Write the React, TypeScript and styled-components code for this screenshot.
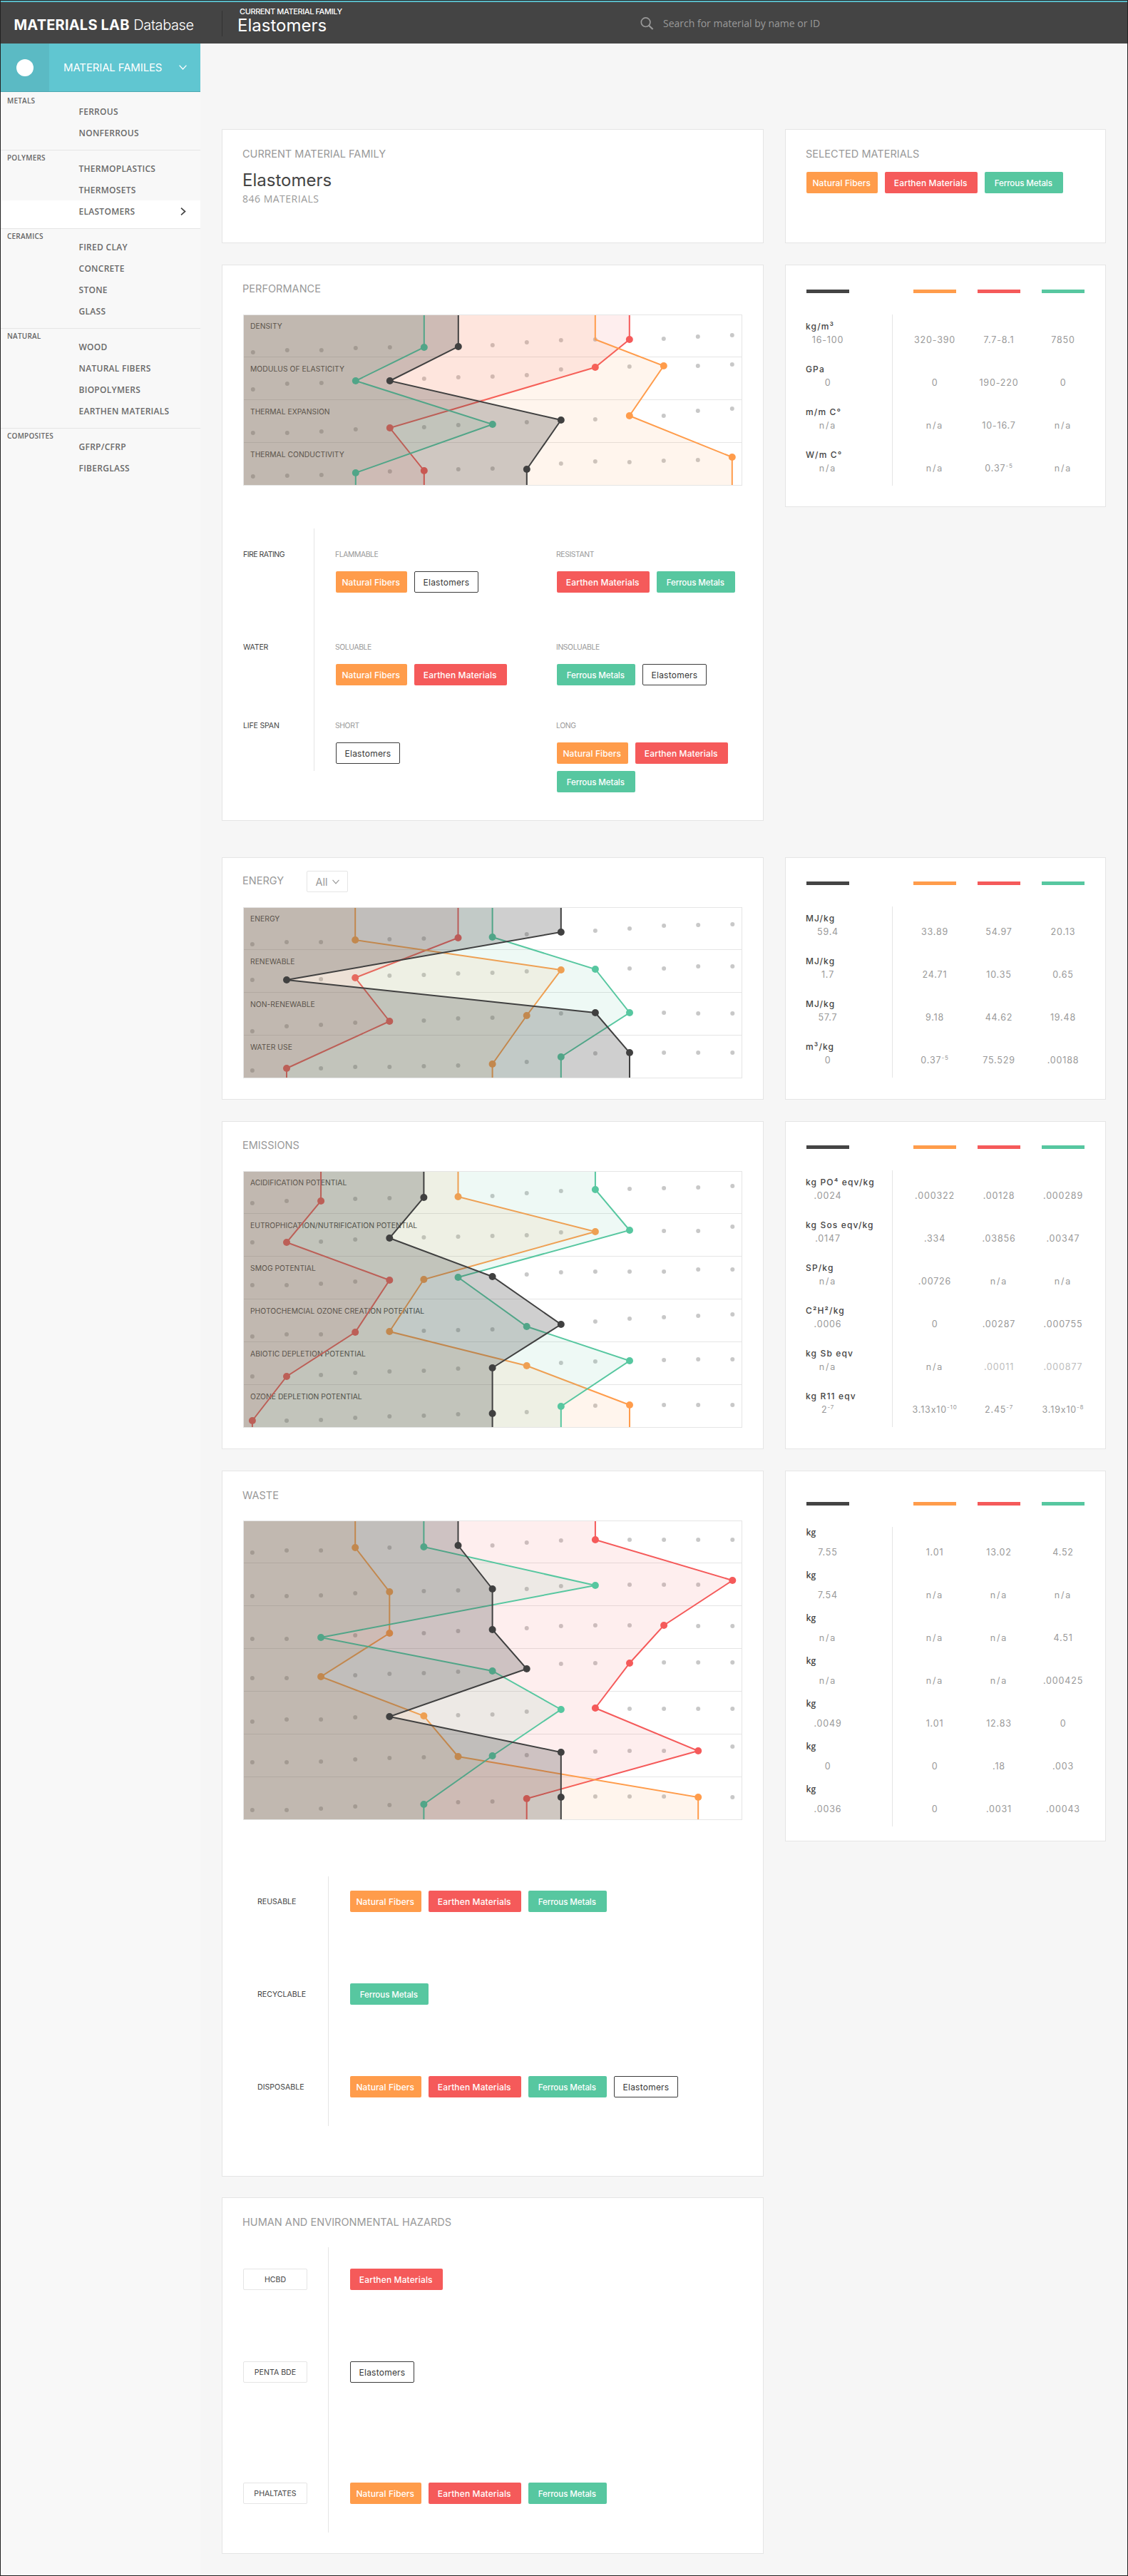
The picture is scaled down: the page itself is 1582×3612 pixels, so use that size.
import React from "react";
import styled, { createGlobalStyle, css } from "styled-components";

const color = {
  ink: "#444444",
  grey: "#999999",
  line: "#e5e5e5",
  orange: "#ff9c4b",
  red: "#f55a5a",
  green: "#57c7a0",
  teal: "#60c6d1",
};

const sans = `Inter, "Liberation Sans", sans-serif`;
const humanist = `"Open Sans", "Noto Sans", sans-serif`;

const GlobalStyle = createGlobalStyle`
  * { box-sizing: border-box; }
  body { margin: 0; background: #f6f6f6; font-family: ${sans}; color: ${color.ink}; }
`;

/* ---------- page frame ---------- */

const Frame = styled.div`
  width: 1582px;
  height: 3612px;
  border: 1px solid #222;
  display: flex;
  flex-direction: column;
  background: #f6f6f6;
`;

const TopBar = styled.header`
  height: 60px;
  flex: none;
  border-top: 2px solid #59b9c6;
  background: #444;
  color: #fff;
  display: flex;
  align-items: flex-start;
`;

const Brand = styled.div`
  width: 310px;
  padding-left: 18.5px;
  font-size: 20px;
  line-height: 65px;
  white-space: nowrap;
`;

const BrandStrong = styled.strong`
  font-weight: 700;
  letter-spacing: 0.2px;
`;

const BrandLight = styled.span`
  font-weight: 300;
  letter-spacing: -0.4px;
`;

const CurrentFamily = styled.div`
  width: 587px;
  height: 36px;
  margin-top: 12px;
  border-left: 1px solid #333;
`;

const FamilyCaption = styled.div`
  margin-top: -8px;
  padding-left: 24px;
  font-size: 11px;
  font-weight: 500;
  letter-spacing: -0.4px;
  line-height: 19px;
`;

const FamilyName = styled.div`
  padding-left: 21px;
  font-size: 24px;
  line-height: 20px;
`;

const Search = styled.div`
  display: flex;
  align-items: center;
  gap: 13px;
  height: 60px;
  color: #9a9a9a;
  font: 14px/60px ${humanist};
`;

const Body = styled.div`
  flex: 1;
  display: flex;
  min-height: 0;
`;

/* ---------- sidebar ---------- */

const Sidebar = styled.nav`
  width: 280px;
  flex: none;
  background: #f8f8f8;
`;

const FamiliesToggle = styled.div`
  height: 68px;
  margin-bottom: 2px;
  display: flex;
  align-items: center;
  background: ${color.teal};
  border-bottom: 1px solid #4da8b2;
  color: #fff;
`;

const ToggleIcon = styled.div`
  width: 68px;
  height: 67px;
  display: flex;
  align-items: center;
  justify-content: center;
  background: #5bbac4;
`;

const Disc = styled.span`
  width: 24px;
  height: 24px;
  border-radius: 50%;
  background: #fff;
`;

const ToggleText = styled.div`
  width: 182px;
  padding-left: 20px;
  font-size: 15px;
  letter-spacing: -0.14px;
`;

const Group = styled.section`
  padding-bottom: 9px;
  border-bottom: 1px solid ${color.line};
  &:last-child { border-bottom: 0; }
`;

const GroupTitle = styled.div`
  height: 10px;
  padding-left: 9px;
  color: #666;
  font: 600 10px/20px ${humanist};
  letter-spacing: 0.22px;
`;

const Item = styled.div<{ $active?: boolean }>`
  height: 30px;
  padding: 1px 20px 0 109.5px;
  display: flex;
  justify-content: space-between;
  color: #6a6a6a;
  font: 600 12px/30px ${humanist};
  letter-spacing: 0.28px;
  white-space: nowrap;
  ${(p) =>
    p.$active &&
    css`
      height: 39px;
      margin-bottom: -9px;
      background: #fff;
    `}
`;

/* ---------- cards ---------- */

const Main = styled.main`
  flex: 1;
  padding: 120px 30px 0;
`;

const Band = styled.div<{ $gap?: number }>`
  display: flex;
  align-items: flex-start;
  gap: 30px;
  margin-bottom: ${(p) => p.$gap ?? 30}px;
`;

const Card = styled.section<{ $h: number; $narrow?: boolean }>`
  width: ${(p) => (p.$narrow ? 450 : 760)}px;
  height: ${(p) => p.$h}px;
  padding: 0 29px;
  background: #fff;
  border: 1px solid ${color.line};
`;

const CardHeader = styled.div<{ $h?: number }>`
  height: ${(p) => p.$h ?? 69}px;
  display: flex;
  align-items: flex-start;
`;

const Title = styled.h2<{ $mid?: number }>`
  margin: 0 0 0 -1px;
  min-width: 90px;
  font-size: 14.5px;
  font-weight: 400;
  letter-spacing: 0.03px;
  line-height: ${(p) => (p.$mid ?? 34) * 2 - 2}px;
  color: ${color.grey};
  white-space: nowrap;
`;

const Name = styled.div`
  margin-left: -1px;
  font-size: 24px;
  line-height: 33px;
`;

const Count = styled.div`
  margin-left: -1px;
  color: ${color.grey};
  font: 14px/20px ${humanist};
  letter-spacing: 0.5px;
`;

const Dropdown = styled.div`
  margin-top: 18px;
  width: 58px;
  height: 30px;
  border: 1px solid ${color.line};
  border-radius: 2px;
  display: flex;
  align-items: center;
  justify-content: center;
  gap: 6px;
  font-size: 14.5px;
  color: ${color.grey};
`;

/* ---------- material tags ---------- */

type Kind = "N" | "E" | "F" | "X";

const kinds: Record<Kind, { label: string; width: number; fill: string; spacing: number; size: number }> = {
  N: { label: "Natural Fibers", width: 100, fill: color.orange, spacing: 0.08, size: 12 },
  E: { label: "Earthen Materials", width: 130, fill: color.red, spacing: 0.13, size: 12 },
  F: { label: "Ferrous Metals", width: 110, fill: color.green, spacing: -0.1, size: 11.6 },
  X: { label: "Elastomers", width: 90, fill: "", spacing: 0.23, size: 12 },
};

const TagBox = styled.span<{ $kind: Kind }>`
  width: ${(p) => kinds[p.$kind].width}px;
  height: 30px;
  border-radius: 2px;
  display: flex;
  align-items: center;
  justify-content: center;
  padding-top: ${(p) => (p.$kind === "F" ? 2 : 0)}px;
  padding-right: ${(p) => (p.$kind === "X" ? 0 : 1.5)}px;
  font-size: ${(p) => kinds[p.$kind].size}px;
  letter-spacing: ${(p) => kinds[p.$kind].spacing}px;
  white-space: nowrap;
  ${(p) =>
    p.$kind === "X"
      ? css`
          border: 1px solid #3c3c3c;
          color: #383838;
        `
      : css`
          background: ${kinds[p.$kind].fill};
          color: #fff;
          font-weight: 500;
        `}
`;

const TagList = styled.div`
  display: flex;
  flex-wrap: wrap;
  align-content: flex-start;
  gap: 10px;
`;

const Tags = ({ of }: { of: string }) => (
  <TagList>
    {of.split("").map((k) => (
      <TagBox key={k} $kind={k as Kind}>
        {kinds[k as Kind].label}
      </TagBox>
    ))}
  </TagList>
);

/* ---------- trait rows ---------- */

const Traits = styled.div<{ $top: number }>`
  margin-top: ${(p) => p.$top}px;
`;

const TraitRow = styled.div<{ $h: number; $label: number }>`
  display: grid;
  grid-template-columns: ${(p) => p.$label}px 1fr;
  grid-template-rows: ${(p) => p.$h}px;
  height: ${(p) => p.$h}px;
`;

const TraitBody = styled.div<{ $top?: number }>`
  display: flex;
  height: 100%;
  border-left: 1px solid ${color.line};
  padding: ${(p) => p.$top ?? 0}px 0 0 30px;
`;

const TraitLabel = styled.div<{ $tight?: boolean }>`
  font-size: 10.5px;
  letter-spacing: ${(p) => (p.$tight ? -0.5 : -0.15)}px;
  line-height: 74px;
  white-space: nowrap;
`;

const SideLabel = styled.div`
  padding: 21px 0 0 20px;
  font-size: 10.6px;
  line-height: 30px;
`;

const BoxLabel = styled.div`
  width: 90px;
  height: 30px;
  margin-top: 30px;
  border: 1px solid ${color.line};
  border-radius: 2px;
  font-size: 10.6px;
  line-height: 29px;
  text-align: center;
`;

const Option = styled.div<{ $w: number }>`
  width: ${(p) => p.$w}px;
  flex: none;
`;

const OptionTitle = styled.div`
  height: 60px;
  margin-left: -1px;
  font-size: 10.4px;
  letter-spacing: -0.4px;
  line-height: 73px;
  color: ${color.grey};
`;

/* ---------- value tables ---------- */

const Bars = styled.div<{ $top: number; $h: number }>`
  display: flex;
  gap: 30px;
  height: ${(p) => p.$h}px;
  padding-top: ${(p) => p.$top}px;
`;

const Bar = styled.span<{ $fill: string; $first?: boolean }>`
  width: 60px;
  height: 5px;
  margin-right: ${(p) => (p.$first ? 60 : 0)}px;
  background: ${(p) => p.$fill};
`;

const DataRow = styled.div`
  display: flex;
  height: 60px;
`;

const UnitCell = styled.div`
  width: 121px;
  margin-right: 29px;
  border-right: 1px solid ${color.line};
`;

const Unit = styled.div<{ $high?: boolean }>`
  height: 26px;
  margin-left: -1px;
  font-size: 12px;
  font-weight: 500;
  letter-spacing: 1.15px;
  line-height: 33px;
  white-space: nowrap;
  ${(p) =>
    p.$high &&
    css`
      margin-left: -0.5px;
      font: 600 12px/15px ${humanist};
      letter-spacing: 0.2px;
    `}
`;

const Value = styled.div<{ $pale?: boolean; $na?: boolean }>`
  width: 60px;
  height: 20px;
  display: flex;
  justify-content: center;
  font-size: 12.5px;
  line-height: 20px;
  letter-spacing: ${(p) => (p.$na ? 1.8 : 0.85)}px;
  color: ${(p) => (p.$pale ? "#bdbdbd" : color.grey)};
  white-space: nowrap;
`;

const Power = styled.span`
  font-size: 8px;
  line-height: 12px;
`;

const Others = styled.div`
  display: flex;
  gap: 30px;
  padding-top: 26px;
`;

const Num = ({ v }: { v: string }) => {
  const pale = v.startsWith("~");
  const [base, power] = v.replace("~", "").split("^");
  return (
    <Value $pale={pale} $na={v === "n/a"}>
      {base}
      {power && <Power>{power}</Power>}
    </Value>
  );
};

type DataProps = { h: number; top: number; body: number; high?: boolean; rows: string[][] };

const DataCard = ({ h, top, body, high, rows }: DataProps) => (
  <Card $h={h} $narrow>
    <Bars $top={top - 1} $h={body - 1}>
      <Bar $fill={color.ink} $first />
      <Bar $fill={color.orange} />
      <Bar $fill={color.red} />
      <Bar $fill={color.green} />
    </Bars>
    {rows.map(([unit, own, ...rest], i) => (
      <DataRow key={i}>
        <UnitCell>
          <Unit $high={high}>{unit}</Unit>
          <Num v={own} />
        </UnitCell>
        <Others>
          {rest.map((v, j) => (
            <Num key={j} v={v} />
          ))}
        </Others>
      </DataRow>
    ))}
  </Card>
);

/* ---------- profile charts ---------- */

const ChartSvg = styled.svg`
  display: block;
  font-family: ${sans};
`;

type ChartProps = {
  height: number;
  x0: number;
  step: number;
  dots: number[][];
  labels: string[];
  series: { red: number[]; orange: number[]; green: number[]; black: number[] };
  openStart?: boolean;
};

const ProfileChart = ({ height, x0, step, dots, labels, series, openStart }: ChartProps) => {
  const bottom = height - 1;
  const order = [
    { pts: series.red, c: color.red, a: 0.1 },
    { pts: series.orange, c: color.orange, a: 0.1 },
    { pts: series.green, c: color.green, a: 0.1 },
    { pts: series.black, c: "#404040", a: 0.25 },
  ];
  const x = (col: number) => x0 + step * col;
  return (
    <ChartSvg width={700} height={height} viewBox={`0 0 700 ${height}`}>
      <rect x={0.5} y={0.5} width={699} height={height - 1} fill="#fff" stroke={color.line} />
      {dots.slice(1).map((_, i) => (
        <rect key={i} x={1} y={60 * (i + 1) - 1} width={698} height={1} fill={color.line} />
      ))}
      {labels.map((t, i) => (
        <text key={t} x={10} y={20 + 60 * i} fontSize={10.35} fill={color.ink}>
          {t}
        </text>
      ))}
      {dots.map((row, r) => row.map((y, c) => <circle key={`${r}-${c}`} cx={x(c)} cy={y} r={3} fill="#c8c8c8" />))}
      {order.map(({ pts, c, a }, s) => {
        const path = [
          `${x(pts[0])},1`,
          ...pts.map((col, r) => `${x(col)},${dots[r][col]}`),
          `${x(pts[pts.length - 1])},${bottom}`,
        ].join(" ");
        return (
          <g key={s}>
            <polygon points={`1,1 ${path} 1,${bottom}`} fill={c} fillOpacity={a} />
            <polyline points={path} fill="none" stroke={c} strokeWidth={2} />
            {pts.map((col, r) =>
              openStart && s === 1 && r === 0 ? null : <circle key={r} cx={x(col)} cy={dots[r][col]} r={5} fill={c} />
            )}
          </g>
        );
      })}
    </ChartSvg>
  );
};

/* ---------- data ---------- */

const families: [string, string[]][] = [
  ["METALS", ["FERROUS", "NONFERROUS"]],
  ["POLYMERS", ["THERMOPLASTICS", "THERMOSETS", "ELASTOMERS"]],
  ["CERAMICS", ["FIRED CLAY", "CONCRETE", "STONE", "GLASS"]],
  ["NATURAL", ["WOOD", "NATURAL FIBERS", "BIOPOLYMERS", "EARTHEN MATERIALS"]],
  ["COMPOSITES", ["GFRP/CFRP", "FIBERGLASS"]],
];

const performance: ChartProps = {
  height: 240,
  x0: 13.8,
  step: 48,
  openStart: true,
  labels: ["DENSITY", "MODULUS OF ELASTICITY", "THERMAL EXPANSION", "THERMAL CONDUCTIVITY"],
  dots: [
    [53, 50, 50, 47, 46, 46, 45, 43, 39, 36, 35, 35, 34, 31, 29],
    [105, 97, 96, 93, 93, 90, 88, 87, 85, 77, 74, 73, 72, 72, 70],
    [166, 166, 164, 161, 159, 158, 155, 154, 151, 148, 147, 142, 142, 135, 132],
    [227, 226, 225, 222, 220, 219, 217, 216, 217, 209, 206, 207, 205, 204, 200],
  ],
  series: { red: [11, 10, 4, 5], orange: [10, 12, 11, 14], green: [5, 3, 7, 3], black: [6, 4, 9, 8] },
};

const energy: ChartProps = {
  height: 240,
  x0: 12.9,
  step: 48.1,
  labels: ["ENERGY", "RENEWABLE", "NON-RENEWABLE", "WATER USE"],
  dots: [
    [52, 49, 49, 46, 45, 44, 43, 42, 38, 35, 33, 30, 26, 25, 24],
    [102, 102, 101, 99, 96, 95, 93, 92, 90, 88, 87, 86, 86, 83, 83],
    [174, 167, 165, 162, 160, 159, 156, 155, 152, 149, 148, 148, 148, 149, 149],
    [229, 226, 226, 224, 224, 223, 222, 220, 217, 210, 205, 204, 204, 204, 204],
  ],
  series: { red: [6, 3, 4, 1], orange: [3, 9, 8, 7], green: [7, 10, 11, 9], black: [9, 1, 10, 11] },
};

const emissions: ChartProps = {
  height: 360,
  x0: 12.9,
  step: 48.1,
  labels: [
    "ACIDIFICATION POTENTIAL",
    "EUTROPHICATION/NUTRIFICATION POTENTIAL",
    "SMOG POTENTIAL",
    "PHOTOCHEMCIAL OZONE CREATION POTENTIAL",
    "ABIOTIC DEPLETION POTENTIAL",
    "OZONE DEPLETION POTENTIAL",
  ],
  dots: [
    [45, 42, 42, 39, 38, 37, 36, 35, 31, 28, 26, 25, 24, 23, 21],
    [100, 100, 99, 96, 94, 93, 92, 91, 90, 86, 85, 83, 84, 84, 78],
    [160, 160, 158, 155, 153, 152, 149, 148, 145, 142, 141, 141, 141, 138, 138],
    [232, 229, 229, 226, 225, 224, 223, 222, 218, 215, 211, 207, 205, 203, 201],
    [288, 288, 286, 283, 281, 280, 277, 276, 273, 269, 267, 266, 265, 264, 264],
    [350, 350, 349, 346, 344, 343, 341, 340, 338, 330, 329, 328, 328, 328, 328],
  ],
  series: {
    red: [2, 1, 4, 3, 1, 0],
    orange: [6, 10, 5, 4, 8, 11],
    green: [10, 11, 6, 8, 11, 9],
    black: [5, 4, 7, 9, 7, 7],
  },
};

const waste: ChartProps = {
  height: 420,
  x0: 12.9,
  step: 48.1,
  labels: [],
  dots: [
    [45, 42, 42, 38, 38, 37, 35, 35, 31, 28, 27, 27, 27, 27, 27],
    [106, 106, 105, 102, 100, 99, 98, 96, 96, 92, 91, 90, 90, 90, 84],
    [166, 166, 164, 161, 158, 158, 155, 153, 151, 148, 147, 147, 147, 148, 148],
    [221, 221, 219, 217, 215, 214, 212, 211, 208, 201, 200, 200, 199, 199, 199],
    [282, 279, 279, 276, 275, 274, 273, 272, 268, 265, 263, 264, 264, 264, 264],
    [339, 339, 338, 335, 333, 332, 331, 330, 329, 325, 324, 323, 323, 323, 317],
    [406, 406, 404, 401, 399, 398, 395, 394, 390, 388, 387, 387, 387, 388, 388],
  ],
  series: {
    red: [10, 14, 12, 11, 10, 13, 8],
    orange: [3, 4, 4, 2, 5, 6, 13],
    green: [5, 10, 2, 7, 9, 7, 5],
    black: [6, 7, 7, 8, 4, 9, 9],
  },
};

const performanceRows = [
  ["kg/m³", "16-100", "320-390", "7.7-8.1", "7850"],
  ["GPa", "0", "0", "190-220", "0"],
  ["m/m C°", "n/a", "n/a", "10-16.7", "n/a"],
  ["W/m C°", "n/a", "n/a", "0.37^-5", "n/a"],
];

const energyRows = [
  ["MJ/kg", "59.4", "33.89", "54.97", "20.13"],
  ["MJ/kg", "1.7", "24.71", "10.35", "0.65"],
  ["MJ/kg", "57.7", "9.18", "44.62", "19.48"],
  ["m³/kg", "0", "0.37^-5", "75.529", ".00188"],
];

const emissionRows = [
  ["kg PO⁴ eqv/kg", ".0024", ".000322", ".00128", ".000289"],
  ["kg Sos eqv/kg", ".0147", ".334", ".03856", ".00347"],
  ["SP/kg", "n/a", ".00726", "n/a", "n/a"],
  ["C²H²/kg", ".0006", "0", ".00287", ".000755"],
  ["kg Sb eqv", "n/a", "n/a", "~.00011", "~.000877"],
  ["kg R11 eqv", "2^-7", "3.13x10^-10", "2.45^-7", "3.19x10^-8"],
];

const wasteRows = [
  ["kg", "7.55", "1.01", "13.02", "4.52"],
  ["kg", "7.54", "n/a", "n/a", "n/a"],
  ["kg", "n/a", "n/a", "n/a", "4.51"],
  ["kg", "n/a", "n/a", "n/a", ".000425"],
  ["kg", ".0049", "1.01", "12.83", "0"],
  ["kg", "0", "0", ".18", ".003"],
  ["kg", ".0036", "0", ".0031", ".00043"],
];

const traits = [
  { label: "FIRE RATING", tight: true, h: 130, a: ["FLAMMABLE", "NX"], b: ["RESISTANT", "EF"] },
  { label: "WATER", h: 110, a: ["SOLUABLE", "NE"], b: ["INSOLUABLE", "FX"] },
  { label: "LIFE SPAN", h: 100, a: ["SHORT", "X"], b: ["LONG", "NEF"] },
];

/* ---------- icons ---------- */

const ChevronDown = ({ w, h, stroke }: { w: number; h: number; stroke: string }) => (
  <svg width={w} height={h} viewBox="0 0 11 7" fill="none" stroke={stroke} strokeWidth={1.3}>
    <path d="M0.6 0.6 5.5 6 10.4 0.6" />
  </svg>
);

const ChevronRight = () => (
  <svg width={8} height={11} viewBox="0 0 8 11" fill="none" stroke="#444" strokeWidth={1.7}>
    <path d="M1 0.7 6.5 5.5 1 10.3" />
  </svg>
);

const ItemArrow = styled.span`
  display: flex;
  align-items: center;
  height: 29px;
`;

const SearchIcon = () => (
  <svg width={19} height={18} viewBox="0 0 19 18" fill="none" stroke="#9a9a9a">
    <circle cx={7.6} cy={7.2} r={6.3} strokeWidth={1.7} />
    <path d="M12 11.8 17.6 17" strokeWidth={2.2} />
  </svg>
);

export default function App() {
  return (
    <Frame>
      <GlobalStyle />
      <TopBar>
        <Brand>
          <BrandStrong>MATERIALS LAB</BrandStrong> <BrandLight>Database</BrandLight>
        </Brand>
        <CurrentFamily>
          <FamilyCaption>CURRENT MATERIAL FAMILY</FamilyCaption>
          <FamilyName>Elastomers</FamilyName>
        </CurrentFamily>
        <Search>
          <SearchIcon />
          Search for material by name or ID
        </Search>
      </TopBar>
      <Body>
        <Sidebar>
          <FamiliesToggle>
            <ToggleIcon>
              <Disc />
            </ToggleIcon>
            <ToggleText>MATERIAL FAMILES</ToggleText>
            <ChevronDown w={11} h={7} stroke="#fff" />
          </FamiliesToggle>
          {families.map(([title, items]) => (
            <Group key={title}>
              <GroupTitle>{title}</GroupTitle>
              {items.map((item) => (
                <Item key={item} $active={item === "ELASTOMERS"}>
                  {item}
                  {item === "ELASTOMERS" && (
                    <ItemArrow>
                      <ChevronRight />
                    </ItemArrow>
                  )}
                </Item>
              ))}
            </Group>
          ))}
        </Sidebar>
        <Main>
          <Band>
            <Card $h={160}>
              <CardHeader $h={54}>
                <Title $mid={35}>CURRENT MATERIAL FAMILY</Title>
              </CardHeader>
              <Name>Elastomers</Name>
              <Count>846 MATERIALS</Count>
            </Card>
            <Card $h={160} $narrow>
              <CardHeader $h={59}>
                <Title $mid={35}>SELECTED MATERIALS</Title>
              </CardHeader>
              <Tags of="NEF" />
            </Card>
          </Band>

          <Band $gap={51}>
            <Card $h={780}>
              <CardHeader>
                <Title>PERFORMANCE</Title>
              </CardHeader>
              <ProfileChart {...performance} />
              <Traits $top={60}>
                {traits.map((t) => (
                  <TraitRow key={t.label} $h={t.h} $label={99}>
                    <TraitLabel $tight={t.tight}>{t.label}</TraitLabel>
                    <TraitBody>
                      <Option $w={310}>
                        <OptionTitle>{t.a[0]}</OptionTitle>
                        <Tags of={t.a[1]} />
                      </Option>
                      <Option $w={260}>
                        <OptionTitle>{t.b[0]}</OptionTitle>
                        <Tags of={t.b[1]} />
                      </Option>
                    </TraitBody>
                  </TraitRow>
                ))}
              </Traits>
            </Card>
            <DataCard h={340} top={35} body={70} rows={performanceRows} />
          </Band>

          <Band>
            <Card $h={340}>
              <CardHeader>
                <Title $mid={33}>ENERGY</Title>
                <Dropdown>
                  All
                  <ChevronDown w={10} h={7} stroke="#999" />
                </Dropdown>
              </CardHeader>
              <ProfileChart {...energy} />
            </Card>
            <DataCard h={340} top={34} body={69} rows={energyRows} />
          </Band>

          <Band>
            <Card $h={460}>
              <CardHeader>
                <Title>EMISSIONS</Title>
              </CardHeader>
              <ProfileChart {...emissions} />
            </Card>
            <DataCard h={460} top={34} body={69} rows={emissionRows} />
          </Band>

          <Band $gap={29}>
            <Card $h={990}>
              <CardHeader>
                <Title $mid={35}>WASTE</Title>
              </CardHeader>
              <ProfileChart {...waste} />
              <Traits $top={79}>
                {[
                  { label: "REUSABLE", h: 130, tags: "NEF" },
                  { label: "RECYCLABLE", h: 130, tags: "F" },
                  { label: "DISPOSABLE", h: 90, tags: "NEFX" },
                ].map((r) => (
                  <TraitRow key={r.label} $h={r.h} $label={119}>
                    <SideLabel>{r.label}</SideLabel>
                    <TraitBody $top={20}>
                      <Tags of={r.tags} />
                    </TraitBody>
                  </TraitRow>
                ))}
              </Traits>
            </Card>
            <DataCard h={520} top={44} body={79} rows={wasteRows} high />
          </Band>

          <Card $h={500}>
            <CardHeader>
              <Title $mid={35}>HUMAN AND ENVIRONMENTAL HAZARDS</Title>
            </CardHeader>
            {[
              { label: "HCBD", h: 130, tags: "E" },
              { label: "PENTA BDE", h: 170, tags: "X" },
              { label: "PHALTATES", h: 100, tags: "NEF" },
            ].map((r) => (
              <TraitRow key={r.label} $h={r.h} $label={119}>
                <BoxLabel>{r.label}</BoxLabel>
                <TraitBody $top={30}>
                  <Tags of={r.tags} />
                </TraitBody>
              </TraitRow>
            ))}
          </Card>
        </Main>
      </Body>
    </Frame>
  );
}
